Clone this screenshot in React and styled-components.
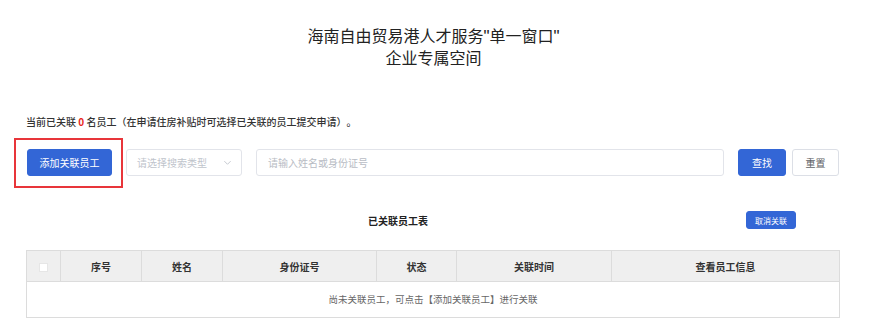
import React from "react";
import styled, { createGlobalStyle } from "styled-components";

const Global = createGlobalStyle`
  html, body { margin: 0; padding: 0; background: #fff; }
  body {
    font-family: "Noto Sans CJK SC", "Noto Sans", sans-serif;
    color: #333;
    text-spacing-trim: space-all;
  }
  * { box-sizing: border-box; }
`;

const Page = styled.div`
  width: 869px;
  padding: 25px 30px 0 26px;
`;

const Heading = styled.h1`
  margin: 0 0 0 2px;
  font-size: 16px;
  line-height: 21px;
  font-weight: 400;
  color: #222;
  text-align: center;
`;

const Quote = styled.span`
  font-family: "Liberation Sans", Arial, sans-serif;
  font-size: 17px;
`;

const Info = styled.p`
  margin: 47px 0 0 0;
  font-size: 10px;
  line-height: 14px;
  font-weight: 500;
  color: #333;
`;

const Red = styled.span`
  color: #e8281e;
  font-weight: 700;
`;

const SearchRow = styled.div`
  display: flex;
  align-items: center;
  margin-top: 20px;
  height: 27px;
`;

const Annotated = styled.div`
  position: relative;
  display: flex;
  margin-left: 1px;
`;

const RedFrame = styled.div`
  position: absolute;
  top: -11px;
  left: -13px;
  right: -11px;
  bottom: -12px;
  border: 2px solid #e8353a;
  pointer-events: none;
`;

const Button = styled.button`
  height: ${(p) => p.$h || 27}px;
  width: ${(p) => p.$w}px;
  padding: 0;
  margin-left: ${(p) => p.$ml || 0}px;
  margin-right: ${(p) => p.$mr || 0}px;
  font-family: inherit;
  font-size: ${(p) => p.$fs || 10}px;
  border-radius: 3px;
  cursor: pointer;
  border: 1px solid ${(p) => (p.$plain ? "#dcdfe6" : "#3366d6")};
  background: ${(p) => (p.$plain ? "#fff" : "#3366d6")};
  color: ${(p) => (p.$plain ? "#606266" : "#fff")};
`;

const Select = styled.div`
  margin-left: 14px;
  width: 116px;
  height: 27px;
  border: 1px solid #e2e4ea;
  border-radius: 3px;
  display: flex;
  align-items: center;
  justify-content: space-between;
  padding: 0 9px 0 10px;
  font-size: 10px;
  color: #c0c4cc;
`;

const Input = styled.div`
  margin-left: 14px;
  width: 468px;
  height: 27px;
  border: 1px solid #e2e4ea;
  border-radius: 3px;
  display: flex;
  align-items: center;
  padding: 0 11px;
  font-size: 10px;
  color: #b8bcc4;
`;

const TableBar = styled.div`
  display: flex;
  align-items: center;
  margin-top: 35px;
  height: 18px;
`;

const TableTitle = styled.div`
  flex: 1;
  padding-left: 342px;
  font-size: 10px;
  font-weight: 700;
  color: #222;
`;

const Table = styled.table`
  margin-top: 21px;
  width: 813px;
  border-collapse: collapse;
  table-layout: fixed;
  font-size: 10px;
`;

const Th = styled.th`
  height: 31px;
  background: #efefef;
  border: 1px solid #dcdcdc;
  font-weight: 700;
  color: #333;
  padding: 0;
  text-align: center;
`;

const Td = styled.td`
  height: 36px;
  border: 1px solid #dcdcdc;
  text-align: center;
  font-size: 9.5px;
  color: #666;
  padding: 0 0 2px 0;
`;

const Check = styled.span`
  display: inline-block;
  width: 9px;
  height: 9px;
  background: #fff;
  border: 1px solid #e6e6e6;
  vertical-align: middle;
`;

const cols = [34, 81, 81, 154, 80, 155, 228];

export default function App() {
  return (
    <Page>
      <Global />
      <Heading>
        海南自由贸易港人才服务<Quote>"</Quote>单一窗口<Quote>"</Quote>
        <br />
        企业专属空间
      </Heading>
      <Info>
        当前已关联 <Red>0</Red> 名员工（在申请住房补贴时可选择已关联的员工提交申请）。
      </Info>
      <SearchRow>
        <Annotated>
          <Button $w={85}>添加关联员工</Button>
          <RedFrame />
        </Annotated>
        <Select>
          <span>请选择搜索类型</span>
          <svg width="9" height="9" viewBox="0 0 10 10" fill="none">
            <path d="M1.5 3.5 L5 7 L8.5 3.5" stroke="#c0c4cc" strokeWidth="1" />
          </svg>
        </Select>
        <Input>请输入姓名或身份证号</Input>
        <Button $w={48} $ml={14}>查找</Button>
        <Button $w={47} $ml={6} $plain>重置</Button>
      </SearchRow>
      <TableBar>
        <TableTitle>已关联员工表</TableTitle>
        <Button $w={50} $h={18} $fs={8} $mr={43}>取消关联</Button>
      </TableBar>
      <Table>
        <colgroup>
          {cols.map((w, i) => (
            <col key={i} style={{ width: w }} />
          ))}
        </colgroup>
        <thead>
          <tr>
            <Th><Check /></Th>
            <Th>序号</Th>
            <Th>姓名</Th>
            <Th>身份证号</Th>
            <Th>状态</Th>
            <Th>关联时间</Th>
            <Th>查看员工信息</Th>
          </tr>
        </thead>
        <tbody>
          <tr>
            <Td colSpan={7}>尚未关联员工，可点击【添加关联员工】进行关联</Td>
          </tr>
        </tbody>
      </Table>
    </Page>
  );
}
